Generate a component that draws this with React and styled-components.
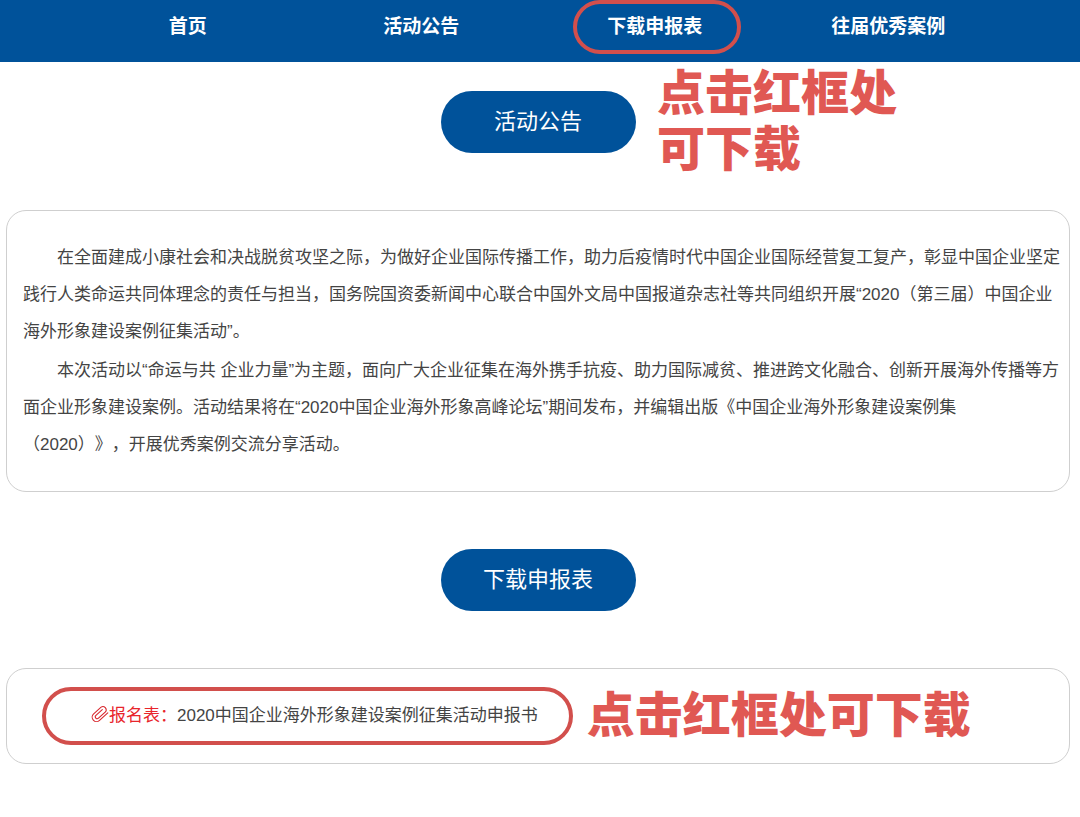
import React from 'react'
import styled, { createGlobalStyle, css } from 'styled-components'

const GlobalStyle = createGlobalStyle`
    * {
        box-sizing: border-box;
    }

    body {
        margin: 0;
        background: #ffffff;
        color: #444444;
        font-family: "Liberation Sans", "Noto Sans CJK SC", sans-serif;
        font-size: 17px;
        text-spacing-trim: space-all;
    }
`

const navItems = [
    { title: '首页', href: '#home' },
    { title: '活动公告', href: '#notice' },
    { title: '下载申报表', href: '#download', marked: true },
    { title: '往届优秀案例', href: '#cases' },
]

function ClipIcon() {
    return (
        <Clip viewBox="-9 -9 18 18" aria-hidden="true">
            <path
                transform="rotate(-42)"
                d="M6.5 4.4 H-4.6 A4.4 4.4 0 0 1 -4.6 -4.4 H5.4 A3.3 3.3 0 0 1 5.4 2.1 H-3.9 A1.9 1.9 0 0 1 -3.9 -1.7 H4.6"
            />
        </Clip>
    )
}

function App() {
    return (
        <>
            <GlobalStyle />
            <Nav>
                {navItems.map((item) => (
                    <NavCell key={item.href}>
                        <NavLink href={item.href} $marked={item.marked}>{item.title}</NavLink>
                    </NavCell>
                ))}
            </Nav>
            <Content>
                <SectionHead id="notice">
                    <Pill>活动公告</Pill>
                    <SideNote>点击红框处<br />可下载</SideNote>
                </SectionHead>
                <Article>
                    <Paragraph>在全面建成小康社会和决战脱贫攻坚之际，为做好企业国际传播工作，助力后疫情时代中国企业国际经营复工复产，彰显中国企业坚定践行人类命运共同体理念的责任与担当，国务院国资委新闻中心联合中国外文局中国报道杂志社等共同组织开展“2020（第三届）中国企业海外形象建设案例征集活动”。</Paragraph>
                    <Paragraph>本次活动以“命运与共 企业力量”为主题，面向广大企业征集在海外携手抗疫、助力国际减贫、推进跨文化融合、创新开展海外传播等方面企业形象建设案例。活动结果将在“2020中国企业海外形象高峰论坛”期间发布，并编辑出版《中国企业海外形象建设案例集<br />（2020）》，开展优秀案例交流分享活动。</Paragraph>
                </Article>
                <SectionHead id="download">
                    <Pill>下载申报表</Pill>
                </SectionHead>
                <Files>
                    <FileLink href="#form">
                        <ClipIcon />
                        <FileLabel>报名表：</FileLabel>
                        <span>2020中国企业海外形象建设案例征集活动申报书</span>
                    </FileLink>
                    <Note>点击红框处可下载</Note>
                </Files>
            </Content>
        </>
    )
}

export default App

const redFrame = css`
    border: 4px solid #d24f4c;
    border-radius: 30px;
`

const Nav = styled.nav`
    display: flex;
    height: 62px;
    padding: 0 75px 8px 71px;
    background: #00529a;
`

const NavCell = styled.div`
    flex: 1;
    display: flex;
    align-items: center;
    justify-content: center;
`

const NavLink = styled.a`
    position: relative;
    color: #ffffff;
    font-size: 19px;
    font-weight: 700;
    line-height: 28px;
    text-decoration: none;

    ${({ $marked }) => $marked && css`
        &::after {
            content: "";
            position: absolute;
            inset: -13px -39px -13px -34px;
            ${redFrame}
        }
    `}
`

const Content = styled.main`
    padding: 0 10px 54px 6px;
`

const SectionHead = styled.header`
    position: relative;
    display: flex;
    justify-content: center;
    padding: 29px 0 57px;

    section + & {
        padding-top: 57px;
    }
`

const Pill = styled.h2`
    width: 195px;
    margin: 0;
    border-radius: 31px;
    background: #00529a;
    color: #ffffff;
    font-size: 22px;
    font-weight: 400;
    line-height: 62px;
    text-align: center;
`

const Note = styled.strong`
    color: #e05853;
    font-size: 48px;
    font-weight: 900;
    line-height: 56px;
    white-space: nowrap;
`

const SideNote = styled(Note)`
    position: absolute;
    top: 4px;
    left: calc(50% + 119px);
`

const Panel = styled.section`
    border: 1px solid #cfcfcf;
    border-radius: 20px;
`

const Article = styled(Panel)`
    padding: 28px 7px 28px 16px;
`

const Paragraph = styled.p`
    margin: 0;
    line-height: 37px;
    text-indent: 2em;

    & + & {
        margin-top: 2px;
    }
`

const Files = styled(Panel)`
    display: flex;
    align-items: center;
    gap: 14px;
    padding: 18px 35px;
`

const FileLink = styled.a`
    ${redFrame}
    display: flex;
    align-items: center;
    height: 58px;
    padding: 0 31px 0 45px;
    color: #444444;
    line-height: 24px;
    text-decoration: none;
    white-space: nowrap;
`

const FileLabel = styled.span`
    color: #e8252b;
`

const Clip = styled.svg`
    width: 18px;
    height: 18px;
    margin-bottom: 4px;
    fill: none;
    stroke: #d8262c;
    stroke-width: 1.1;
    stroke-linecap: round;
`
